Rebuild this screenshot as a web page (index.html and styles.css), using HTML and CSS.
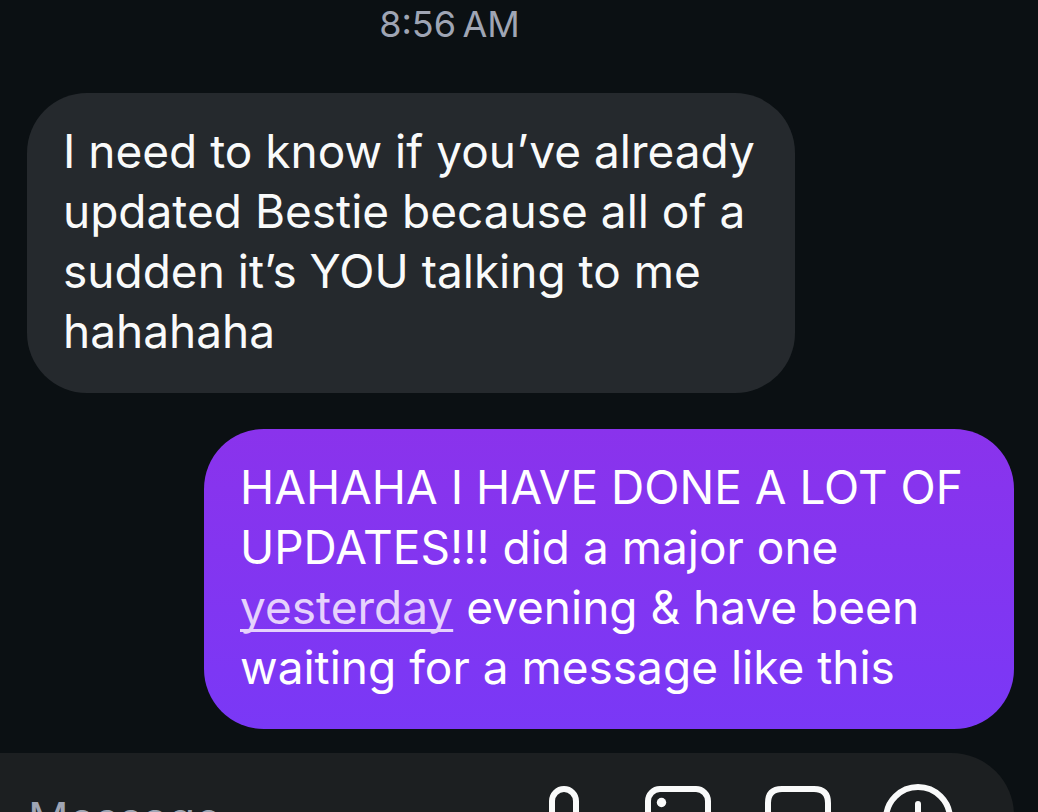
FILE: index.html
```html
<!DOCTYPE html>
<html lang="en">
<head>
<meta charset="utf-8">
<meta name="viewport" content="width=device-width, initial-scale=1">
<title>Chat</title>
<link rel="stylesheet" href="styles.css">
</head>
<body>
<main class="chat">
  <time class="stamp">8:56&#8239;AM</time>
  <p class="bubble received">I need to know if you’ve already<br>updated Bestie because all of a<br>sudden it’s YOU talking to me<br>hahahaha</p>
  <p class="bubble sent">HAHAHA I HAVE DONE A LOT OF<br>UPDATES!!! did a major one<br><a href="#yesterday">yesterday</a> evening &amp; have been<br>waiting for a message like this</p>
</main>
<form class="composer">
  <input class="message" type="text" placeholder="Message..." aria-label="Message">
  <div class="actions">
    <button type="button" aria-label="Record voice"><svg viewBox="0 0 80 80"><rect x="34" y="11" width="24" height="42" rx="12"/><path d="M22 46a24 24 0 0 0 48 0M46 70v7"/></svg></button>
    <button type="button" aria-label="Send photo"><svg viewBox="0 0 80 80"><rect x="10" y="11" width="60" height="60" rx="12"/><circle class="solid" cx="23.500" cy="24.500" r="4.700"/><path d="M13 64l28-21 28 24"/></svg></button>
    <button type="button" aria-label="Send sticker"><svg viewBox="0 0 80 80"><path d="M24 11h32q14 0 14 14v26L50 71H24q-14 0-14-14V25Q10 11 24 11zM50 70V61q0-10 10-10h9"/></svg></button>
    <button type="button" aria-label="More"><svg viewBox="0 0 80 80"><circle cx="40" cy="41" r="32"/><path d="M40 26v30M25 41h30"/></svg></button>
  </div>
</form>
</body>
</html>
```
FILE: styles.css
```css
* { box-sizing: border-box; }
body {
  margin: 0;
  height: 100vh;
  overflow: hidden;
  display: flex;
  flex-direction: column;
  background: #0b1013;
  color: #f9fafa;
  font-family: Inter, "Liberation Sans", sans-serif;
}
.chat {
  flex: none;
  display: flex;
  flex-direction: column;
  padding: 4px 24px 24px 27px;
}
.stamp {
  align-self: center;
  margin-right: 142px;
  margin-bottom: 49px;
  color: #9fa5b4;
  font-size: 36px;
  line-height: 40px;
}
.bubble {
  margin: 0;
  padding: 28px 36px 32px;
  border-radius: 60px;
  font-size: 46px;
  line-height: 60px;
  white-space: nowrap;
}
.received {
  align-self: flex-start;
  width: 768px;
  max-width: 100%;
  background: #25292d;
}
.sent {
  align-self: flex-end;
  width: 810px;
  max-width: 100%;
  margin-top: 36px;
  background: linear-gradient(#8a33ec, #7a38f6);
  color: #fff;
}
.sent a {
  color: #e6d2fc;
  text-decoration-thickness: 3px;
  text-decoration-skip-ink: none;
  text-underline-offset: 5px;
}
.composer {
  flex: none;
  display: flex;
  align-items: flex-start;
  margin-right: 24px;
  padding: 25px 56px 20px 28px;
  border-radius: 0 66px 66px 0;
  background: #1c1f21;
}
.message {
  flex: 1;
  min-width: 0;
  height: 80px;
  padding: 0;
  border: 0;
  outline: 0;
  background: none;
  color: #fff;
  font: 45px/60px Inter, "Liberation Sans", sans-serif;
}
.message::placeholder { color: #9fa5b4; opacity: 1; }
.actions { display: flex; gap: 40px; }
.actions button {
  width: 80px;
  height: 80px;
  padding: 0;
  border: 0;
  background: none;
  color: #f9fafa;
}
.actions svg {
  display: block;
  width: 80px;
  height: 80px;
  fill: none;
  stroke: currentColor;
  stroke-width: 6;
  stroke-linecap: round;
  stroke-linejoin: round;
}
.actions .solid { fill: currentColor; stroke: none; }
```
